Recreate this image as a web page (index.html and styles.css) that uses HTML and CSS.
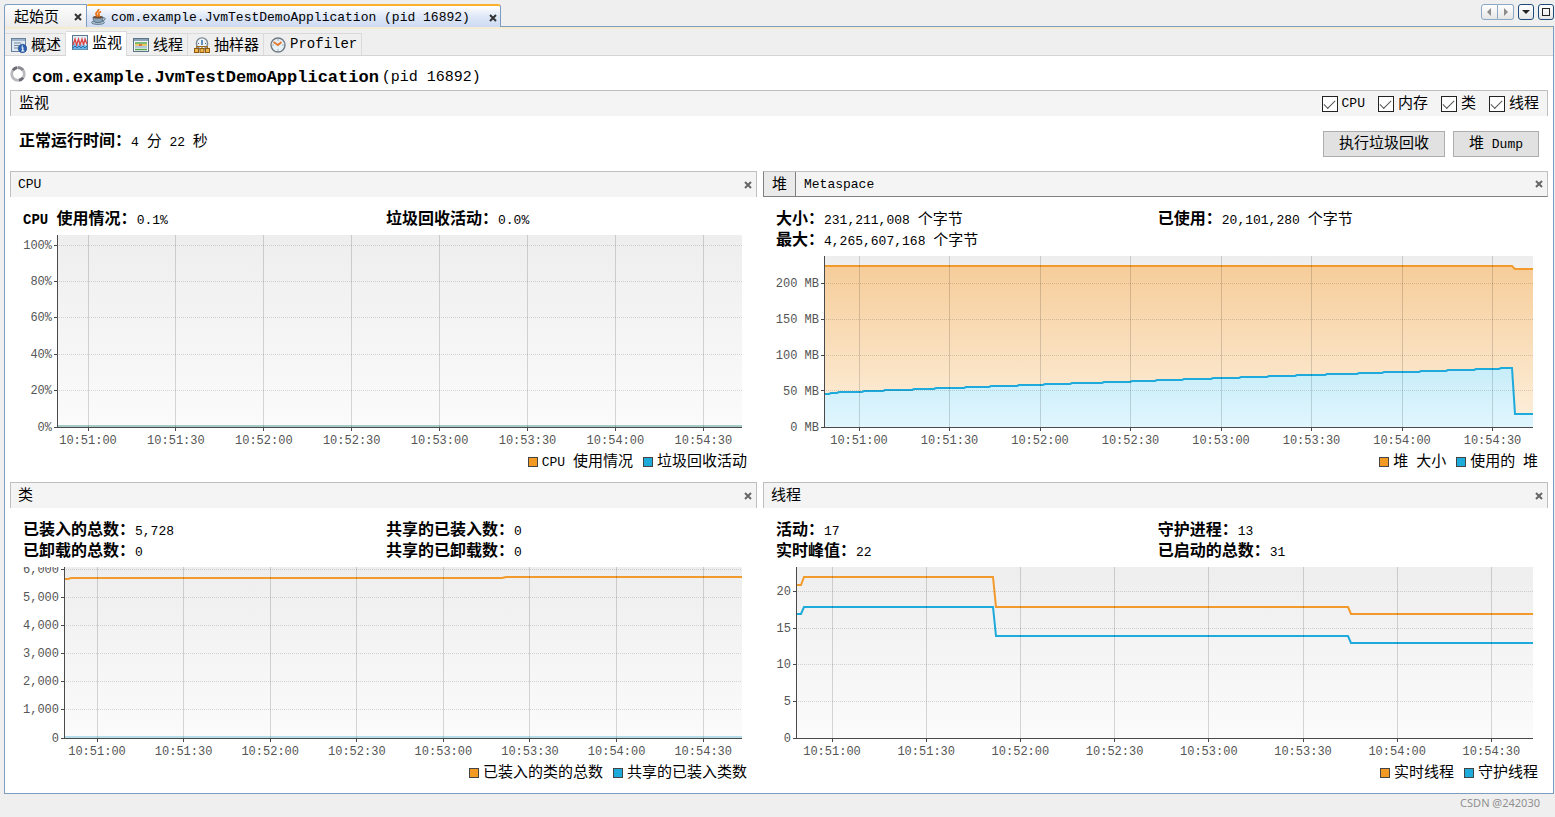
FILE: index.html
```html
<!DOCTYPE html>
<html lang="zh-CN">
<head>
<meta charset="utf-8">
<title>com.example.JvmTestDemoApplication (pid 16892)</title>
<link rel="stylesheet" href="styles.css">
</head>
<body>
<header class="tabbar">
  <div class="tab"><button class="tab-label zh">起始页</button><button class="tab-close" aria-label="关闭"><svg width="8" height="8" viewBox="0 0 8 8"><path d="M1 1l6 6M7 1L1 7"/></svg></button></div>
  <div class="tab tab-active">
    <svg width="16" height="16" viewBox="0 0 16 16"><ellipse cx="7" cy="13.500" rx="6.500" ry="2" fill="#a9bccb" stroke="#5c7488" stroke-width=".8"/><path d="M2 8h10c0 3-1.500 5.500-3 5.500H5C3 13.500 2 11 2 8z" fill="#8ba3b6" stroke="#4c677d" stroke-width=".8"/><path d="M12 9c3-1 3 2.500-.8 2.800" fill="none" stroke="#4c677d"/><ellipse cx="7" cy="8.300" rx="4.800" ry="1.300" fill="#6b4a37"/><path d="M7.500 0c1 2-3 3-2.500 5 .2 1.200 1 1.800 1.800 2.500M10 2.500C8 3.500 7 4.500 8 6c.3.600 0 1.200-.4 1.700" fill="none" stroke="#ea7416" stroke-width="1.800"/></svg>
    <button class="tab-label">com.example.JvmTestDemoApplication (pid 16892)</button><button class="tab-close" aria-label="关闭"><svg width="8" height="8" viewBox="0 0 8 8"><path d="M1 1l6 6M7 1L1 7"/></svg></button>
  </div>
  <div class="window-tools">
    <div class="pair">
      <button class="tool" aria-label="向左"><svg width="14" height="14" viewBox="0 0 14 14"><path d="M9 3v8L5 7z" fill="#8c8c8c"/></svg></button><button class="tool" aria-label="向右"><svg width="14" height="14" viewBox="0 0 14 14"><path d="M6 3v8l4-4z" fill="#8c8c8c"/></svg></button>
    </div>
    <button class="tool tool-dark" aria-label="列表"><svg width="14" height="14" viewBox="0 0 14 14"><path d="M3 5h8L7 9z" fill="#222"/></svg></button>
    <button class="tool tool-dark" aria-label="最大化"><svg width="14" height="14" viewBox="0 0 14 14"><rect x="3.500" y="3.500" width="7" height="7" fill="none" stroke="#222"/></svg></button>
  </div>
</header>

<main class="frame">
  <nav class="subtabs">
    <button class="subtab"><svg width="16" height="16" viewBox="0 0 16 16"><rect x=".5" y="1.500" width="14" height="13" fill="#dfe8f1" stroke="#66809c"/><path d="M1 3h13" stroke="#9db3c9" stroke-width="2"/><path d="M3 6h7M3 8.500h5M3 11h4" stroke="#7188a0"/><circle cx="11.500" cy="11.500" r="4.200" fill="#2b5fb0" stroke="#173f86" stroke-width=".6"/><path d="M10.500 10.800h1.300v3M10.300 14h3M11.300 8.500v1.300" stroke="#fff" stroke-width="1.200" fill="none"/></svg><span class="zh">概述</span></button>
    <button class="subtab subtab-active"><svg width="16" height="16" viewBox="0 0 16 16"><rect x=".5" y=".5" width="15" height="14" fill="#e4f0f8" stroke="#57768f"/><path d="M1 14.500V10l2-2 1 3 2-3 1 3 2-3 1 3 2-3 1 3 2-2v5.500z" fill="#6db2e4"/><path d="M1 10l2-6 1.500 6L6.500 4 8 10l2-6 1.500 6L13 4l2 5" fill="none" stroke="#df4646" stroke-width="1.300"/><path d="M1 13l2-2 2 2 2-2 2 2 2-2 2 2 2-2" fill="none" stroke="#2677b8"/></svg><span class="zh">监视</span></button>
    <button class="subtab"><svg width="16" height="16" viewBox="0 0 16 16"><rect x=".5" y="1.500" width="15" height="13" fill="#f2f4f6" stroke="#5c7488"/><path d="M1 3h14" stroke="#8aa3b8" stroke-width="2"/><path d="M2 6h12M2 12.500h12" stroke="#58a84d" stroke-width="1.500"/><path d="M2 8h12" stroke="#e9bb30" stroke-width="1.500"/><path d="M2 10h12" stroke="#719fbf"/><path d="M6 8h3" stroke="#d5593b" stroke-width="1.500"/></svg><span class="zh">线程</span></button>
    <button class="subtab"><svg width="16" height="16" viewBox="0 0 16 16"><circle cx="8" cy="6.500" r="5.600" fill="#edf3f8" stroke="#7c8791" stroke-width="1.400"/><path d="M4 6.500h1M11 6.500h1" stroke="#466785"/><path d="M8 3v5" stroke="#3372a9" stroke-width="1.500"/><path d="M2.500 11.500V9.500h11v2M8 9.500v2" stroke="#9b6a1b" fill="none"/><g fill="#f0b54a" stroke="#8e5b12"><rect x=".5" y="11.500" width="4" height="4"/><rect x="6" y="11.500" width="4" height="4"/><rect x="11.500" y="11.500" width="4" height="4"/></g></svg><span class="zh">抽样器</span></button>
    <button class="subtab"><svg width="16" height="16" viewBox="0 0 16 16"><circle cx="8" cy="8" r="7" fill="#e6f1f8" stroke="#737b83" stroke-width="1.400"/><path d="M8 2.500v1M8 12.500v1M2.500 8h1M12.500 8h1" stroke="#5f7383"/><path d="M3.500 5L8 8l3.500-3" fill="none" stroke="#e77930" stroke-width="1.900"/></svg><span>Profiler</span></button>
  </nav>

  <div class="content">
    <h1 class="title"><svg width="16" height="16" viewBox="0 0 16 16"><circle cx="8" cy="8" r="6.300" fill="none" stroke="#b9b9bf" stroke-width="2.800"/><path d="M3 4.300A6.300 6.300 0 0 1 7 1.700M13 11.700A6.300 6.300 0 0 1 9 14.200" fill="none" stroke="#6a6a72" stroke-width="2.800"/><path d="M8 1.700a6.300 6.300 0 0 1 5 2.500" fill="none" stroke="#8a8a92" stroke-width="2.800"/></svg><strong>com.example.JvmTestDemoApplication</strong><span class="pid">(pid 16892)</span></h1>

    <section class="bar">
      <h2 class="bar-title zh">监视</h2>
      <div class="checks">
        <label class="check"><input type="checkbox" checked>CPU</label>
        <label class="check"><input type="checkbox" checked><span class="zh">内存</span></label>
        <label class="check"><input type="checkbox" checked><span class="zh">类</span></label>
        <label class="check"><input type="checkbox" checked><span class="zh">线程</span></label>
      </div>
    </section>

    <div class="uptime">
      <p class="uptime-text"><b class="zh">正常运行时间：</b>4 <span class="zh">分</span> 22 <span class="zh">秒</span></p>
      <div class="actions">
        <button class="btn"><span class="zh">执行垃圾回收</span></button>
        <button class="btn"><span class="zh">堆</span> Dump</button>
      </div>
    </div>

    <div class="panels">
      <section class="panel">
        <header class="bar"><h2 class="bar-title">CPU</h2><button class="close" aria-label="关闭"><svg width="8" height="8" viewBox="0 0 8 8"><path d="M1 1l6 6M7 1L1 7"/></svg></button></header>
        <div class="stats">
          <p><b>CPU <span class="zh">使用情况：</span></b>0.1%</p><p><b class="zh">垃圾回收活动：</b>0.0%</p>
        </div>
        <div class="plot-wrap axis-cpu" data-chart="cpu"></div>
        <ul class="legend"><li><i class="swatch orange"></i>CPU <span class="zh">使用情况</span></li><li><i class="swatch blue"></i><span class="zh">垃圾回收活动</span></li></ul>
      </section>

      <section class="panel">
        <header class="bar bar-tabs"><button class="bar-tab bar-tab-active zh">堆</button><button class="bar-tab">Metaspace</button><button class="close" aria-label="关闭"><svg width="8" height="8" viewBox="0 0 8 8"><path d="M1 1l6 6M7 1L1 7"/></svg></button></header>
        <div class="stats">
          <p><b class="zh">大小：</b>231,211,008 <span class="zh">个字节</span></p><p><b class="zh">已使用：</b>20,101,280 <span class="zh">个字节</span></p>
          <p><b class="zh">最大：</b>4,265,607,168 <span class="zh">个字节</span></p>
        </div>
        <div class="plot-wrap axis-heap" data-chart="heap"></div>
        <ul class="legend"><li><i class="swatch orange"></i><span class="zh">堆</span> <span class="zh">大小</span></li><li><i class="swatch blue"></i><span class="zh">使用的</span> <span class="zh">堆</span></li></ul>
      </section>

      <section class="panel">
        <header class="bar"><h2 class="bar-title zh">类</h2><button class="close" aria-label="关闭"><svg width="8" height="8" viewBox="0 0 8 8"><path d="M1 1l6 6M7 1L1 7"/></svg></button></header>
        <div class="stats">
          <p><b class="zh">已装入的总数：</b>5,728</p><p><b class="zh">共享的已装入数：</b>0</p>
          <p><b class="zh">已卸载的总数：</b>0</p><p><b class="zh">共享的已卸载数：</b>0</p>
        </div>
        <div class="plot-wrap axis-classes" data-chart="classes"></div>
        <ul class="legend"><li><i class="swatch orange"></i><span class="zh">已装入的类的总数</span></li><li><i class="swatch blue"></i><span class="zh">共享的已装入类数</span></li></ul>
      </section>

      <section class="panel">
        <header class="bar"><h2 class="bar-title zh">线程</h2><button class="close" aria-label="关闭"><svg width="8" height="8" viewBox="0 0 8 8"><path d="M1 1l6 6M7 1L1 7"/></svg></button></header>
        <div class="stats">
          <p><b class="zh">活动：</b>17</p><p><b class="zh">守护进程：</b>13</p>
          <p><b class="zh">实时峰值：</b>22</p><p><b class="zh">已启动的总数：</b>31</p>
        </div>
        <div class="plot-wrap axis-threads" data-chart="threads"></div>
        <ul class="legend"><li><i class="swatch orange"></i><span class="zh">实时线程</span></li><li><i class="swatch blue"></i><span class="zh">守护线程</span></li></ul>
      </section>
    </div>
  </div>
</main>
<footer class="credit">CSDN @242030</footer>
<script src="charts.js"></script>
</body>
</html>
```
FILE: styles.css
```css
* { box-sizing: border-box; }
body {
  margin: 0;
  min-height: 100vh;
  display: flex;
  flex-direction: column;
  background: #efefef;
  color: #000;
  font: 13px/21px "Liberation Mono", "Noto Sans CJK SC", monospace;
}
button { font: inherit; color: inherit; border: 0; background: none; padding: 0; }
h1, h2, p, ul { margin: 0; padding: 0; font-weight: normal; list-style: none; }
svg { display: block; flex: none; }
.zh { font-size: 15px; font-family: "Noto Sans CJK SC", sans-serif; }
b { font-size: 14px; }
b.zh, b .zh { font-size: 16px; }

/* document tabs */
.tabbar { display: flex; align-items: flex-end; padding: 4px 1px 0 4px; height: 26px; }
.tab {
  display: flex; align-items: center; height: 23px; margin-bottom: -1px; position: relative;
  padding: 0 4px 0 9px; border: 1px solid #7c9dbf; border-bottom: 0;
  border-radius: 3px 0 0 0; background: linear-gradient(#fdfdfd, #ececec);
}
.tab .tab-label { white-space: nowrap; margin-right: 15px; line-height: 20px; }
.tab-close path, .close path { stroke: #333; stroke-width: 2; }
.tab-close { padding-top: 2px; }
.tab-active {
  border-left: 0; border-top: 2px solid #fbb02b; border-radius: 2px 3px 0 0; padding: 0 3px 0 4px;
  background: linear-gradient(#fff, #dfe8f8 50%, #cddaf2);
}
.tab-active .tab-label { margin: 2px 19px 0 4px; }
.window-tools { display: flex; gap: 4px; margin: 0 0 6px auto; }
.pair { display: flex; }
.tool { width: 16px; height: 16px; border: 1px solid #8ba8c6; border-radius: 3px; background: linear-gradient(#fff, #e6e6e6); }
.pair .tool + .tool { border-left: 0; border-radius: 0 3px 3px 0; }
.pair .tool:first-child { border-radius: 3px 0 0 3px; width: 17px; }
.tool-dark { border-color: #1c4a7c; }

.frame {
  flex: 1; display: flex; flex-direction: column; margin: 0 1px 0 4px;
  border: 1px solid #7c9dbf; background: #fff;
}

/* view tabs */
.subtabs { display: flex; align-items: flex-end; height: 29px; background: #efefef; border-top: 2px solid #f3ecd0; border-bottom: 1px solid #d4d4d4; }
.subtab { display: flex; align-items: center; gap: 4px; height: 22px; padding: 0 4px 0 6px; border: 1px solid #dadada; border-left: 0; border-bottom: 0; white-space: nowrap; }
.subtab-active { height: 25px; margin-bottom: -1px; padding-bottom: 3px; background: #fff; }
.subtab .zh { padding-bottom: 2px; }
.subtab span:not(.zh) { font-size: 14px; }

.content { flex: 1; display: flex; flex-direction: column; padding: 0 5px; }
.title { display: flex; align-items: center; height: 34px; padding-top: 8px; }
.title svg { margin: 0 6px 6px 0; }
.title strong { font-size: 17px; }
.title .pid { font-size: 15px; margin-left: 3px; }

.bar {
  display: flex; align-items: center; justify-content: space-between; height: 26px; flex: none;
  background: #f4f4f4; border: 1px solid #bfbfbf; border-bottom: 0; padding: 0 8px;
}
.bar-title { font-size: 13px; }
.bar-title.zh { font-size: 15px; }
.bar-title.zh, .check .zh, .bar-tab.zh { padding-bottom: 4px; }
.checks { display: flex; gap: 13px; }
.check { display: flex; align-items: center; gap: 4px; height: 24px; }
.check input {
  appearance: none; width: 16px; height: 16px; margin: 0; border: 1px solid #222; background: #fff;
  display: grid; place-items: center;
}
.check input:checked::before {
  content: ""; width: 10px; height: 5px; border: solid #555; border-width: 0 0 1px 1px;
  transform: translateY(-1px) rotate(-45deg);
}
.uptime { display: flex; justify-content: space-between; align-items: center; height: 55px; padding: 0 9px; }
.uptime-text { margin-top: -6px; }
.actions { display: flex; gap: 8px; }
.btn { height: 26px; padding: 0 15px; border: 1px solid #adadad; background: #e1e1e1; line-height: 20px; padding-bottom: 2px; }

/* monitor panels */
.panels { flex: 1; display: grid; grid-template-columns: minmax(0, 747fr) minmax(0, 785fr); grid-template-rows: 1fr 1fr; column-gap: 6px; }
.panel { display: flex; flex-direction: column; min-height: 240px; }
.panel .bar { padding: 0 4px 0 7px; }
.close path { stroke: #666; }
.panel .bar-tabs { padding-left: 0; justify-content: flex-start; align-items: stretch; border-bottom: 1px solid #808080; border-left-color: #808080; }
.bar-tab { padding: 0 8px; }
.bar-tab-active { background: #eaeaea; border-right: 1px solid #808080; }
.bar-tabs .close { margin-left: auto; }

.stats { display: grid; grid-template-columns: 363fr 371fr; padding: 10px 0 7px 13px; }
.stats p { height: 21px; white-space: nowrap; }

.plot-wrap { flex: 1; display: flex; margin: 0 15px 23px 0; }
.axis-cpu { padding-left: 47px; }
.axis-heap { padding-left: 61px; }
.axis-classes { padding-left: 54px; }
.axis-threads { padding-left: 33px; }
.plot { flex: 1; width: 100%; min-width: 0; overflow: visible; clip-path: inset(0 -40px -24px -70px); }
.plot text { font-size: 12px; fill: #555; }
.plot .axis { stroke: #4a4a4a; shape-rendering: crispEdges; }
.plot .vline { stroke: #000; stroke-opacity: .15; shape-rendering: crispEdges; }
.plot .hline { stroke: #000; stroke-opacity: .15; stroke-dasharray: 1 1; shape-rendering: crispEdges; }
.plot .line { fill: none; stroke-width: 2px; vector-effect: non-scaling-stroke; }

.legend { display: flex; justify-content: flex-end; gap: 10px; height: 32px; padding-right: 10px; line-height: 20px; white-space: nowrap; }
.legend li { display: block; }
.swatch { display: inline-block; width: 10px; height: 10px; margin: 0 4px -1px 0; border: 1px solid #444; }
.orange { background: #f29a24; }
.blue { background: #1eaadb; }

.credit { height: 23px; padding-right: 15px; text-align: right; font: 11px/18px "Noto Sans", sans-serif; color: #8f8f8f; }
```
FILE: charts.js
```js
const TIMES = ["10:51:00", "10:51:30", "10:52:00", "10:52:30", "10:53:00", "10:53:30", "10:54:00", "10:54:30"];
const ORANGE = "#f29a2c", BLUE = "#1eaadb";

// used heap: start of each step and its level
const used = [[0, 138], [5, 137], [13, 136], [38, 135], [59, 134], [88, 133], [110, 132], [140, 131], [165, 130], [193, 129],
  [219, 128], [246, 127], [278, 126], [306, 125], [331, 124], [358, 123], [387, 122], [415, 121], [443, 120], [471, 119],
  [501, 118], [533, 117], [558, 116], [595, 115], [622, 114], [650, 113], [675, 112]];
const usedPoints = used.flatMap(([x, y], i) => [[x + (i ? 2 : 0), y], [(used[i + 1] || [688])[0], y]]).concat([[691, 158], [709, 158]]);

const CHARTS = {
  cpu: { w: 685, h: 192, first: 31, step: 87.9, ticks: [["100%", 10], ["80%", 46], ["60%", 82], ["40%", 119], ["20%", 155], ["0%", 192]],
    series: [{ color: "#4f9c93", width: 1, points: [[0, 191], [685, 191]] }] },
  heap: { w: 709, h: 171, first: 35, step: 90.5, ticks: [["200 MB", 27], ["150 MB", 63], ["100 MB", 99], ["50 MB", 135], ["0 MB", 171]],
    series: [{ color: ORANGE, fill: ["#f6cd9a", "#fdf0dd"], points: [[0, 10], [688, 10], [691, 13], [709, 13]] },
             { color: BLUE, fill: ["#c7edf9", "#e1f6fe"], points: usedPoints }] },
  classes: { w: 678, h: 171, first: 33, step: 86.6, ticks: [["6,000", 2], ["5,000", 30], ["4,000", 58], ["3,000", 86], ["2,000", 114], ["1,000", 142], ["0", 171]],
    series: [{ color: ORANGE, points: [[0, 12], [4, 12], [7, 11], [438, 11], [442, 10], [678, 10]] },
             { color: "#6fbfd8", width: 1, points: [[0, 170], [678, 170]] }] },
  threads: { w: 737, h: 171, first: 36, step: 94.2, ticks: [["20", 24], ["15", 61], ["10", 97], ["5", 134], ["0", 171]],
    series: [{ color: ORANGE, points: [[0, 18], [5, 18], [8, 10], [197, 10], [200, 40], [552, 40], [555, 47], [737, 47]] },
             { color: BLUE, points: [[0, 47], [5, 47], [8, 40], [197, 40], [200, 69], [552, 69], [555, 76], [737, 76]] }] }
};

function gradient(id, from, to) {
  return `<linearGradient id="${id}" x1="0" y1="0" x2="0" y2="1"><stop offset="0" stop-color="${from}"/><stop offset="1" stop-color="${to}"/></linearGradient>`;
}

function draw(name, c) {
  let defs = gradient(name + "-bg", "#eeeeee", "#fbfbfb"), shapes = "", grid = "";
  c.series.forEach((s, i) => {
    const pts = s.points.map(p => p.join()).join(" ");
    if (s.fill) {
      defs += gradient(`${name}-${i}`, ...s.fill);
      shapes += `<polygon points="0,${c.h} ${pts} ${c.w},${c.h}" fill="url(#${name}-${i})"/>`;
    }
    shapes += `<polyline class="line" points="${pts}" style="stroke:${s.color};stroke-width:${s.width || 2}px"/>`;
  });
  c.ticks.forEach(([label, y]) => {
    const p = y / c.h * 100 + "%";
    grid += `<line class="hline" x1="0" x2="100%" y1="${p}" y2="${p}"/><line class="axis" x1="-3" x2="0" y1="${p}" y2="${p}"/><text x="-5" y="${p}" dy="4" text-anchor="end">${label}</text>`;
  });
  TIMES.forEach((label, i) => {
    const p = (c.first + i * c.step) / c.w * 100 + "%";
    grid += `<line class="vline" x1="${p}" x2="${p}" y1="0" y2="100%"/><svg x="${p}" y="100%" overflow="visible"><line class="axis" x1="0" x2="0" y1="0" y2="4"/></svg><text x="${p}" y="100%" dy="17" text-anchor="middle">${label}</text>`;
  });
  return `<svg class="plot" role="img" aria-label="${name}"><defs>${defs}</defs><rect width="100%" height="100%" fill="url(#${name}-bg)"/>` +
    `<svg width="100%" height="100%" viewBox="0 0 ${c.w} ${c.h}" preserveAspectRatio="none">${shapes}</svg>${grid}` +
    `<line class="axis" x1="0" x2="0" y1="0" y2="100%"/><line class="axis" x1="0" x2="100%" y1="100%" y2="100%"/></svg>`;
}

document.querySelectorAll("[data-chart]").forEach(el => { el.innerHTML = draw(el.dataset.chart, CHARTS[el.dataset.chart]); });
```
